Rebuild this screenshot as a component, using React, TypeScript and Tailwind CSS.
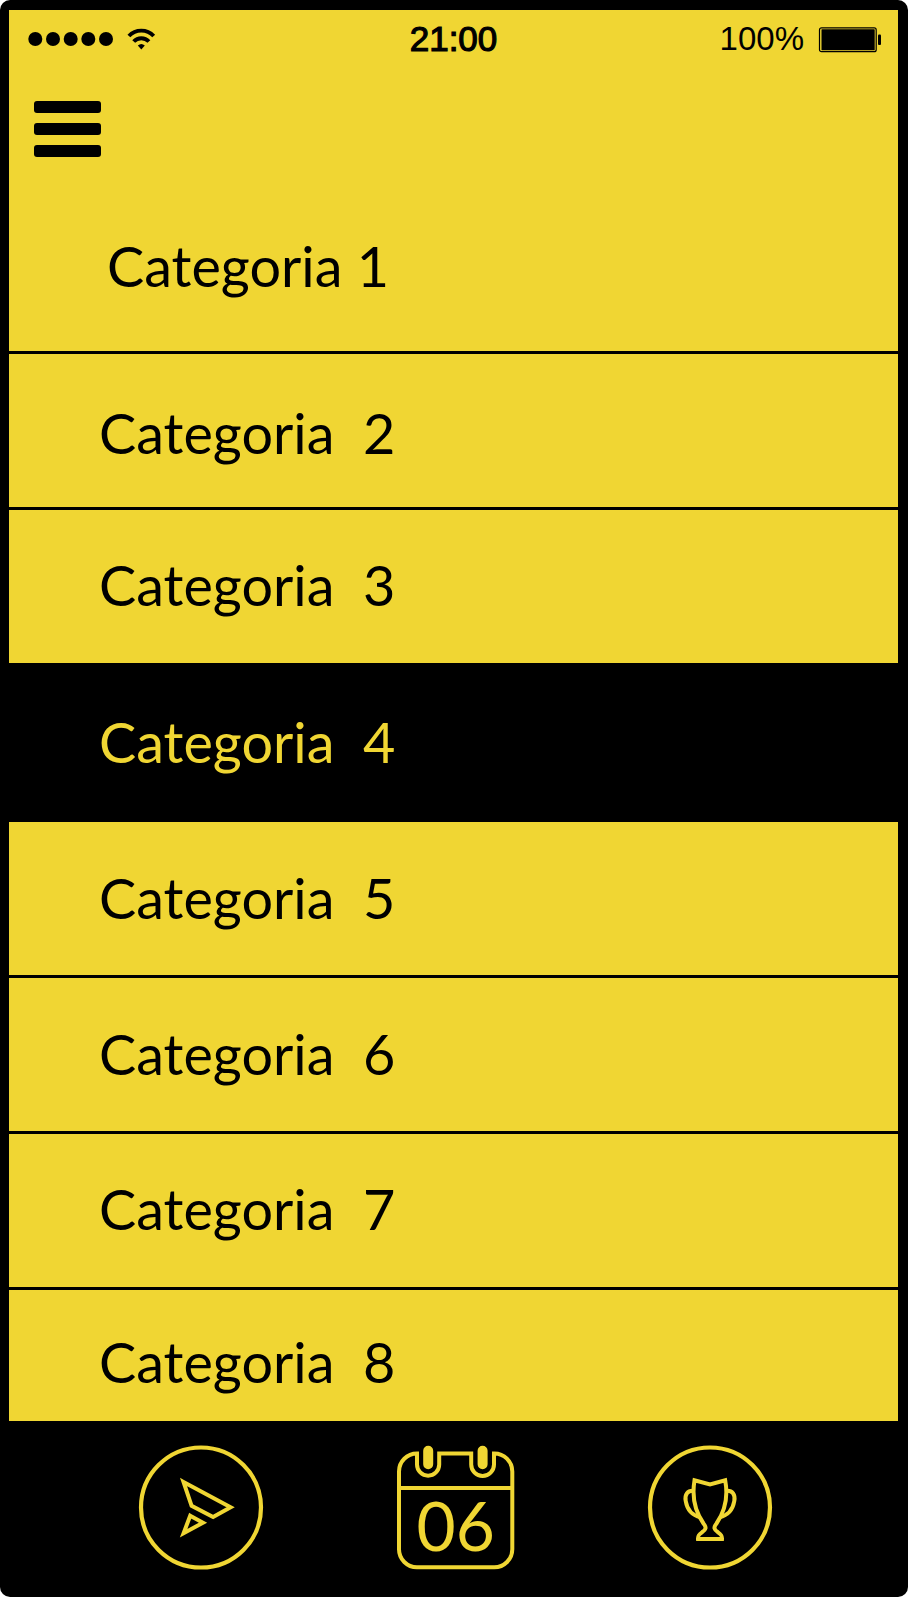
const rows = [
  { n: 1, cls: 'h-[164px] pt-[48px] pl-[98px] border-b-3', text: 'Categoria 1' },
  { n: 2, cls: 'h-[156px] pt-[51px] pl-[90px] border-b-3', text: 'Categoria  2' },
  { n: 3, cls: 'h-[153px] pt-[47px] pl-[90px]', text: 'Categoria  3' },
  { n: 4, cls: 'h-[159px] pt-[51px] pl-[90px] bg-black text-[#f0d633]', text: 'Categoria  4' },
  { n: 5, cls: 'h-[156px] pt-[48px] pl-[90px] border-b-3', text: 'Categoria  5' },
  { n: 6, cls: 'h-[156px] pt-[48px] pl-[90px] border-b-3', text: 'Categoria  6' },
  { n: 7, cls: 'h-[156px] pt-[47px] pl-[90px] border-b-3', text: 'Categoria  7' },
  { n: 8, cls: 'h-[131px] pt-[44px] pl-[90px]', text: 'Categoria  8' },
];

function StatusBar() {
  return (
    <div className="flex h-[58px] items-center pl-[19px] pr-[17px] font-['Liberation_Sans',sans-serif] leading-none">
      <div className="flex flex-1 items-center">
        <svg width="86" height="16" viewBox="0 0 86 16">
          {[7.3, 25, 42.7, 60.3, 78].map((x) => (
            <circle key={x} cx={x} cy="8" r="7" />
          ))}
        </svg>
        <svg className="ml-3" width="30" height="22" viewBox="0 0 30 22" fill="none" stroke="#000" strokeWidth="3.9">
          <path d="M2.9 8A17 17 0 0 1 27.7 8" />
          <path d="M7.7 13.5A10.4 10.4 0 0 1 22.9 13.5" />
          <path d="M11.8 17.6Q15.3 14.4 18.8 17.6L15.3 21.4Z" fill="#000" stroke="none" />
        </svg>
      </div>
      <span className="-mt-0.5 mr-0.5 text-[35px] [-webkit-text-stroke:1.2px_black]">21:00</span>
      <div className="flex flex-1 items-center justify-end">
        <span className="-mt-0.5 text-[33px]">100%</span>
        <svg className="ml-[14px]" width="63" height="28" viewBox="0 0 63 28">
          <rect x="1.5" y="2.9" width="56.7" height="23.8" rx="2" fill="none" stroke="#000" strokeWidth="1.2" />
          <rect x="3.5" y="4.3" width="53.2" height="20.9" rx="0.5" />
          <rect x="60" y="9.5" width="3" height="10.5" rx="1" />
        </svg>
      </div>
    </div>
  );
}

function SendIcon() {
  return (
    <svg width="126" height="127" viewBox="0 0 126 127" fill="none" stroke="#f0d633" strokeWidth="4">
      <circle cx="63" cy="63.5" r="60" strokeWidth="4.2" />
      <path d="M45.5 38L92.6 63.3L75.1 73L53.6 61.8Z" />
      <path d="M52.2 71.7L65 78.7L45.6 89.2Z" />
    </svg>
  );
}

function CalendarIcon() {
  return (
    <svg width="119" height="127" viewBox="0 0 119 127" fill="none" stroke="#f0d633" strokeWidth="4">
      <path d="M21 9.5A18 18 0 0 0 3 27.5V105.3A18 18 0 0 0 21 123.3H98.3A18 18 0 0 0 116.3 105.3V27.5A18 18 0 0 0 98 9.5V20.6A11.4 11.4 0 0 1 75.2 20.6V9.5H43.2V20.6A11.1 11.1 0 0 1 21 20.6Z" />
      <path d="M3 44H116.3" />
      <path d="M32.2 6.7V20.3M86.6 6.7V20.3" strokeWidth="10" strokeLinecap="round" />
      <text x="59.7" y="107" textAnchor="middle" fill="#f0d633" stroke="none" fontFamily="Lato, sans-serif" fontSize="67.5">06</text>
    </svg>
  );
}

function TrophyIcon() {
  return (
    <svg width="126" height="127" viewBox="0 0 126 127" fill="none" stroke="#f0d633" strokeWidth="4">
      <circle cx="63" cy="63.5" r="60" strokeWidth="4.2" />
      <path d="M51 95H75C75.3 91.5 74 90.3 71 88.3C67 85.8 66.2 83.5 69.5 79.5C77.5 68 81.5 54 78.2 36.3L63 40.4L47.5 36.3C44.5 54 48.5 68 56.5 79.5C59.8 83.5 59 85.8 55 88.3C52 90.3 50.7 91.5 51 95Z" />
      <path d="M47 46.8C40.5 46 37.5 50.5 38.7 57C40.2 66 45.5 71.5 53.5 73.3M79 46.8C85.5 46 88.5 50.5 87.3 57C85.8 66 80.5 71.5 72.5 73.3" />
    </svg>
  );
}

export default function App() {
  return (
    <div className="min-h-screen bg-white">
      <main className="flex h-[1597px] w-[908px] flex-col rounded-[10px] bg-black pr-[10px] pt-[10px] pl-[9px] text-black">
        <section className="bg-[#f0d633]">
          <StatusBar />
          <div className="flex h-[122px] flex-col gap-2.5 pt-[33px] pl-[25px]">
            <i className="h-3 w-[67px] rounded-[3px] bg-black" />
            <i className="h-3 w-[67px] rounded-[3px] bg-black" />
            <i className="h-3 w-[67px] rounded-[3px] bg-black" />
          </div>
          <ul className="font-[Lato,sans-serif] text-[55.75px] leading-[56px] whitespace-pre">
            {rows.map((r) => (
              <li key={r.n} className={`border-black ${r.cls}`}>{r.text}</li>
            ))}
          </ul>
        </section>
        <nav className="flex pt-[23px] pl-[129px]">
          <SendIcon />
          <div className="ml-[132px]"><CalendarIcon /></div>
          <div className="ml-[132px]"><TrophyIcon /></div>
        </nav>
      </main>
    </div>
  );
}
